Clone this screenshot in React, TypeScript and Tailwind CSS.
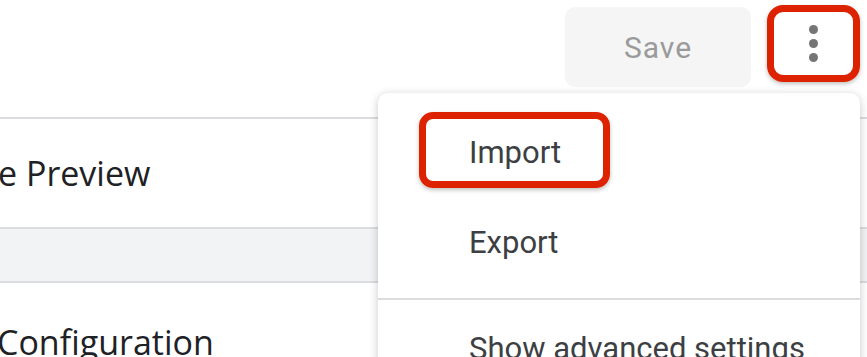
/**
 * Settings page header with overflow menu open (Import highlighted).
 */
export default function App() {
  return (
    <div className="relative w-[867px] h-[357px] overflow-hidden bg-white font-['Roboto',sans-serif]">
      {/* toolbar */}
      <div className="h-[117px] flex items-start justify-end pr-[7px] pt-[5px] gap-[16px]">
        <button className="mt-[2px] w-[186px] h-[80px] rounded-[10px] bg-[#f5f5f5] text-[#9a9a9a] text-[30px] tracking-[1px]">
          Save
        </button>
        <button className="w-[93px] h-[77px] rounded-[16px] border-[7px] border-[#dd2200] flex flex-col items-center justify-center gap-[5px] shadow-[0_2px_4px_rgba(0,0,0,0.25)]">
          <span className="w-[9px] h-[9px] rounded-full bg-[#757575]" />
          <span className="w-[9px] h-[9px] rounded-full bg-[#757575]" />
          <span className="w-[9px] h-[9px] rounded-full bg-[#757575]" />
        </button>
      </div>

      {/* page sections */}
      <div className="border-t-2 border-[#dadce0] h-[110px] flex items-center">
        <span className="-ml-[2px] text-[34px] text-[#202124] font-['Open_Sans',sans-serif] leading-none">e Preview</span>
      </div>
      <div className="border-t-2 border-b-2 border-[#dadce0] bg-[#f1f3f4] h-[56px]" />
      <div className="h-[80px] pt-[42px]">
        <span className="-ml-[3px] text-[34px] text-[#202124] font-['Open_Sans',sans-serif] leading-none">Configuration</span>
      </div>

      {/* overflow menu */}
      <div className="absolute left-[378px] top-[93px] w-[482px] h-[300px] bg-white rounded-[10px] shadow-[0_2px_10px_rgba(0,0,0,0.22)] pt-[15px]">
        <div className="relative h-[90px] flex items-center pl-[91px] text-[31px] text-[#3c4043]">
          Import
          <div className="absolute left-[41px] top-[4px] w-[191px] h-[76px] rounded-[14px] border-[7px] border-[#dd2200] shadow-[0_2px_4px_rgba(0,0,0,0.25)]" />
        </div>
        <div className="h-[90px] flex items-center pl-[91px] text-[31px] text-[#3c4043]">Export</div>
        <div className="mt-[10px] border-t-2 border-[#dadce0]" />
        <div className="h-[90px] flex items-center pl-[91px] pt-[8px] text-[31px] text-[#3c4043]">Show advanced settings</div>
      </div>
    </div>
  );
}
